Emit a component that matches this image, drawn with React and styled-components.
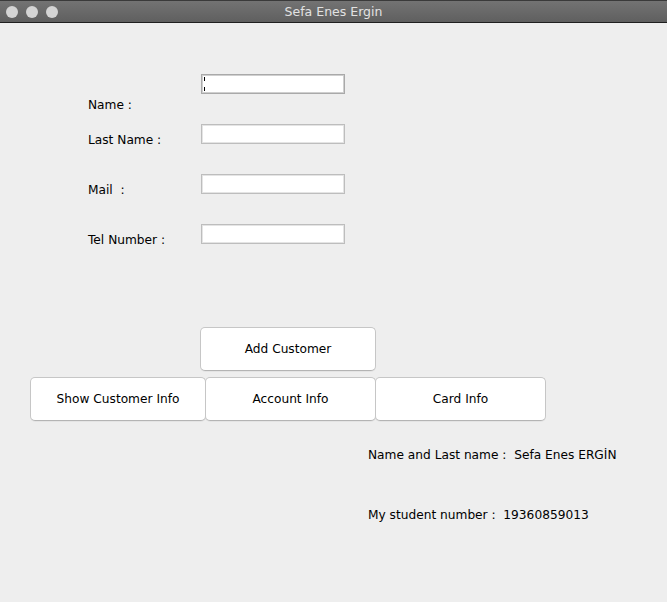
import React from 'react';
import styled, { createGlobalStyle } from 'styled-components';

const GlobalStyle = createGlobalStyle`
  html, body {
    margin: 0;
    padding: 0;
    background: #eeeeee;
  }
  * {
    box-sizing: border-box;
  }
`;

const Window = styled.div`
  width: 667px;
  height: 602px;
  display: flex;
  flex-direction: column;
  background: #eeeeee;
  font-family: "DejaVu Sans", "Liberation Sans", sans-serif;
  font-size: 12.2px;
  color: #000000;
  overflow: hidden;
`;

const TitleBar = styled.div`
  height: 23px;
  flex: none;
  display: flex;
  align-items: center;
  position: relative;
  padding-left: 6px;
  gap: 8px;
  background: linear-gradient(#737373, #5f5f5f);
  border-top: 1px solid #3a3a3a;
  border-bottom: 1px solid #1f1f1f;
`;

const Light = styled.span`
  width: 12px;
  height: 12px;
  border-radius: 50%;
  background: #d4d4d4;
`;

const Title = styled.div`
  position: absolute;
  left: 0;
  right: 0;
  text-align: center;
  color: #e2e2e2;
  font-size: 12.5px;
  pointer-events: none;
`;

const Content = styled.div`
  flex: 1;
  display: flex;
  flex-direction: column;
  padding-top: 51px;
`;

const Form = styled.div`
  display: flex;
  padding-left: 88px;
`;

const LabelColumn = styled.div`
  width: 113px;
  display: flex;
  flex-direction: column;
`;

const Label = styled.div`
  height: 16px;
  line-height: 16px;
  margin-top: ${p => p.$gap}px;
  white-space: pre;
`;

const FieldColumn = styled.div`
  display: flex;
  flex-direction: column;
  gap: 30px;
`;

const Field = styled.div`
  width: 144px;
  height: 20px;
  background: #ffffff;
  border: 1px solid ${p => (p.$focused ? '#a9a9a9' : '#bdbdbd')};
  box-shadow: inset 0 0 0 1px ${p => (p.$focused ? '#cfcfcf' : '#e4e4e4')};
  position: relative;
`;

const Caret = styled.span`
  position: absolute;
  left: 2px;
  top: 2px;
  width: 1px;
  height: 14px;
  background: linear-gradient(#000 0 4px, transparent 4px 10px, #000 10px);
`;

const Buttons = styled.div`
  margin-top: 79px;
  display: flex;
  flex-direction: column;
  gap: 6px;
`;

const TopRow = styled.div`
  padding-left: 200px;
  display: flex;
`;

const ButtonRow = styled.div`
  padding-left: 30px;
  display: flex;
`;

const Button = styled.div`
  width: ${p => p.$w}px;
  height: 44px;
  margin-left: ${p => (p.$joined ? -1 : 0)}px;
  display: flex;
  align-items: center;
  justify-content: center;
  background: #ffffff;
  border: 1px solid #c6c6c6;
  border-bottom-color: #b4b4b4;
  border-radius: 5px;
  box-shadow: 0 1px 0 rgba(0, 0, 0, 0.04);
  color: #000000;
`;

const Info = styled.div`
  margin-top: 26px;
  padding-left: 368px;
  display: flex;
  flex-direction: column;
  gap: 44px;
`;

const InfoLine = styled.div`
  height: 16px;
  line-height: 16px;
  white-space: pre;
`;

export default function App() {
  return (
    <>
      <GlobalStyle />
      <Window>
        <TitleBar>
          <Light />
          <Light />
          <Light />
          <Title>Sefa Enes Ergin</Title>
        </TitleBar>
        <Content>
          <Form>
            <LabelColumn>
              <Label $gap={23}>Name :</Label>
              <Label $gap={19}>Last Name :</Label>
              <Label $gap={34}>Mail  :</Label>
              <Label $gap={34}>Tel Number :</Label>
            </LabelColumn>
            <FieldColumn>
              <Field $focused>
                <Caret />
              </Field>
              <Field />
              <Field />
              <Field />
            </FieldColumn>
          </Form>
          <Buttons>
            <TopRow>
              <Button $w={176}>Add Customer</Button>
            </TopRow>
            <ButtonRow>
              <Button $w={176}>Show Customer Info</Button>
              <Button $w={171} $joined>Account Info</Button>
              <Button $w={171} $joined>Card Info</Button>
            </ButtonRow>
          </Buttons>
          <Info>
            <InfoLine>Name and Last name :  Sefa Enes ERGİN</InfoLine>
            <InfoLine>My student number :  19360859013</InfoLine>
          </Info>
        </Content>
      </Window>
    </>
  );
}
